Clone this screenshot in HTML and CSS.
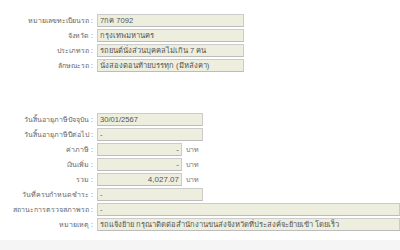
FILE: index.html
```html
<!DOCTYPE html>
<html lang="th">
<head>
	<meta charset="UTF-8">
	<title>ข้อมูลรถ</title>
	<link rel="stylesheet" href="styles.css">
</head>
<body>
	<div class="page">
		<div class="group">
			<div class="row"><div class="label">หมายเลขทะเบียนรถ :</div><div class="field wide">7กค 7092</div></div>
			<div class="row"><div class="label">จังหวัด :</div><div class="field wide">กรุงเทพมหานคร</div></div>
			<div class="row"><div class="label">ประเภทรถ :</div><div class="field wide">รถยนต์นั่งส่วนบุคคลไม่เกิน 7 คน</div></div>
			<div class="row"><div class="label">ลักษณะรถ :</div><div class="field wide">นั่งสองตอนท้ายบรรทุก (มีหลังคา)</div></div>
		</div>
		<div class="group second">
			<div class="row"><div class="label">วันสิ้นอายุภาษีปัจจุบัน :</div><div class="field date">30/01/2567</div></div>
			<div class="row"><div class="label">วันสิ้นอายุภาษีปีต่อไป :</div><div class="field date">-</div></div>
			<div class="row"><div class="label">ค่าภาษี :</div><div class="field money">-</div><span class="unit">บาท</span></div>
			<div class="row"><div class="label">เงินเพิ่ม :</div><div class="field money">-</div><span class="unit">บาท</span></div>
			<div class="row"><div class="label">รวม :</div><div class="field money">4,027.07</div><span class="unit">บาท</span></div>
			<div class="row"><div class="label">วันที่ครบกำหนดชำระ :</div><div class="field date">-</div></div>
			<div class="row"><div class="label">สถานะการตรวจสภาพรถ :</div><div class="field full">-</div></div>
			<div class="row"><div class="label">หมายเหตุ :</div><div class="field full">รถแจ้งย้าย กรุณาติดต่อสำนักงานขนส่งจังหวัดที่ประสงค์จะย้ายเข้า โดยเร็ว</div></div>
		</div>
	</div>
	<div class="footer"></div>
</body>
</html>
```

FILE: styles.css
```css
body {
	margin: 0;
	background: #fff;
	font-family: Tahoma, "Liberation Sans", "Noto Sans", sans-serif;
	font-size: 7.6px;
}
.page { padding-top: 14px; height: 226px; }
.group { display: flex; flex-direction: column; gap: 2px; }
.second { margin-top: 41px; }
.row { display: flex; align-items: center; height: 13px; }
.label {
	width: 93px;
	text-align: right;
	color: #666;
	font-size: 7px;
	padding-right: 4px;
	white-space: nowrap;
}
.field {
	height: 11px;
	line-height: 11px;
	background: #eeeedf;
	border: 1px solid #cbcbcb;
	border-bottom-color: #bcbcbc;
	color: #555;
	padding: 0 2px;
	white-space: nowrap;
	overflow: hidden;
}
.wide { width: 141px; }
.date { width: 100px; }
.money { width: 79px; text-align: right; font-size: 8px; }
.full { width: 297px; }
.unit { color: #777; font-size: 7px; margin-left: 4px; }
.footer { height: 10px; background: #f5f5f5; }
```
